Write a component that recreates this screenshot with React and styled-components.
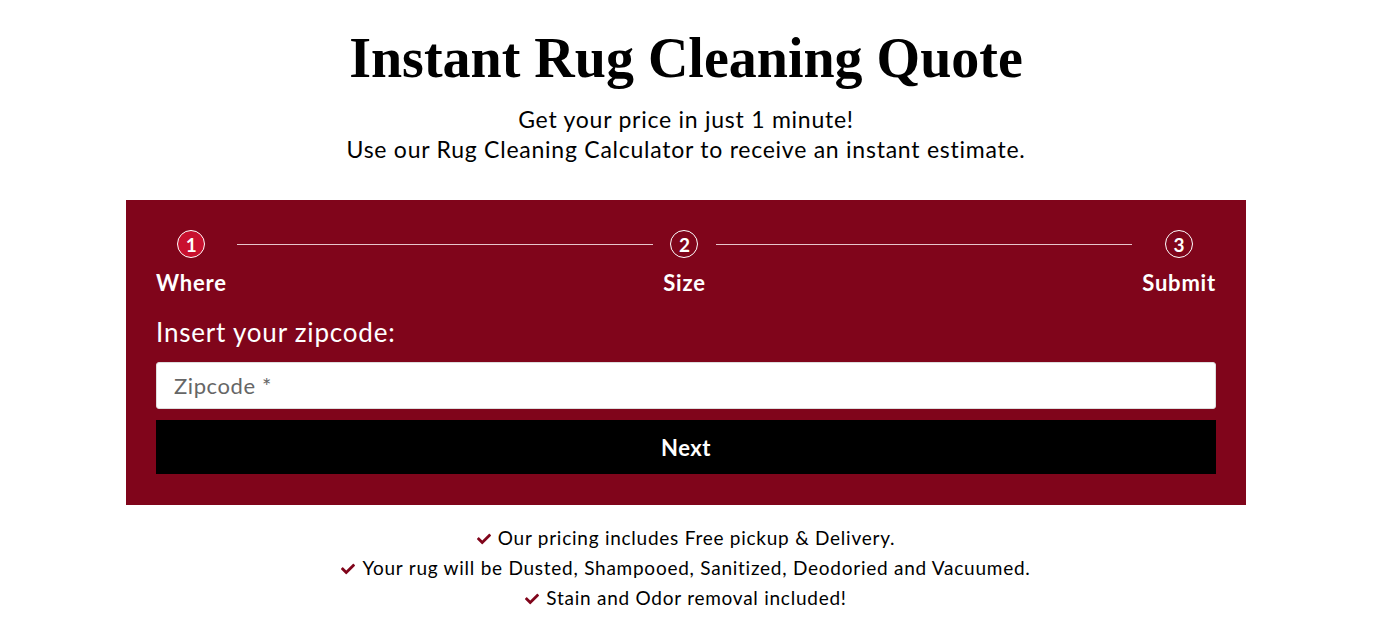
import React from "react";
import styled, { createGlobalStyle } from "styled-components";
import { FaCheck } from "react-icons/fa";

const GlobalStyle = createGlobalStyle`
  body {
    margin: 0;
    background: #ffffff;
    font-family: "Lato", "Noto Sans", sans-serif;
    color: #000;
  }
`;

const Page = styled.div`
  width: 1120px;
  margin: 0 auto;
  padding-top: 24px;
  text-align: center;
  transform: translateX(-1px);
`;

const Title = styled.h1`
  margin: 0;
  font-family: "Liberation Serif", "DejaVu Serif", serif;
  font-weight: 700;
  font-size: 56px;
  line-height: 68px;
`;

const Intro = styled.p`
  margin: 12px 0 0;
  font-size: 23px;
  letter-spacing: 0.75px;
  line-height: 30px;
`;

const Panel = styled.section`
  margin-top: 36px;
  background: #80051b;
  padding: 30px 30px 31px;
  text-align: left;
  color: #fff;
`;

const Steps = styled.div`
  display: flex;
  align-items: flex-start;
`;

const Step = styled.div`
  display: flex;
  flex-direction: column;
  align-items: center;
`;

const Circle = styled.div`
  width: 26px;
  height: 26px;
  border: 1.5px solid #fff;
  border-radius: 50%;
  background: ${(p) => (p.$active ? "#c8102e" : "transparent")};
  display: flex;
  align-items: center;
  justify-content: center;
  font-size: 19px;
  font-weight: 700;
  line-height: 1;
`;

const StepLabel = styled.div`
  margin-top: 12px;
  font-size: 22px;
  letter-spacing: 0.8px;
  font-weight: 700;
  line-height: 26px;
`;

const Line = styled.div`
  flex: 1;
  height: 1px;
  background: #e8c5cb;
  margin: 14px 10px 0;
`;

const FieldLabel = styled.label`
  display: block;
  margin-top: 21px;
  font-size: 26px;
  letter-spacing: 0.8px;
  line-height: 30px;
`;

const Input = styled.input`
  display: block;
  box-sizing: border-box;
  width: 100%;
  height: 47px;
  margin-top: 15px;
  border: 1px solid #ddd;
  border-radius: 3px;
  padding: 0 17px;
  font-family: inherit;
  font-size: 22px;
  letter-spacing: 0.6px;
  color: #333;
  outline: none;
  &::placeholder {
    color: #666;
  }
`;

const Button = styled.button`
  display: block;
  width: 100%;
  height: 54px;
  margin-top: 11px;
  border: none;
  background: #000;
  color: #fff;
  font-family: inherit;
  font-size: 22px;
  letter-spacing: 0.5px;
  font-weight: 700;
  cursor: pointer;
`;

const Features = styled.ul`
  list-style: none;
  margin: 18px 0 0;
  padding: 0;
  font-size: 19px;
  letter-spacing: 0.75px;
  line-height: 30px;
`;

const Feature = styled.li`
  svg {
    color: #80051b;
    font-size: 14px;
    margin-right: 7px;
    vertical-align: -1px;
  }
`;

const steps = ["Where", "Size", "Submit"];

export default function App() {
  return (
    <>
      <GlobalStyle />
      <Page>
        <Title>Instant Rug Cleaning Quote</Title>
        <Intro>
          Get your price in just 1 minute!
          <br />
          Use our Rug Cleaning Calculator to receive an instant estimate.
        </Intro>
        <Panel>
          <Steps>
            {steps.map((s, i) => (
              <React.Fragment key={s}>
                {i > 0 && <Line />}
                <Step>
                  <Circle $active={i === 0}>{i + 1}</Circle>
                  <StepLabel>{s}</StepLabel>
                </Step>
              </React.Fragment>
            ))}
          </Steps>
          <FieldLabel htmlFor="zip">Insert your zipcode:</FieldLabel>
          <Input id="zip" placeholder="Zipcode *" />
          <Button>Next</Button>
        </Panel>
        <Features>
          <Feature>
            <FaCheck />
            Our pricing includes Free pickup &amp; Delivery.
          </Feature>
          <Feature>
            <FaCheck />
            Your rug will be Dusted, Shampooed, Sanitized, Deodoried and Vacuumed.
          </Feature>
          <Feature>
            <FaCheck />
            Stain and Odor removal included!
          </Feature>
        </Features>
      </Page>
    </>
  );
}
